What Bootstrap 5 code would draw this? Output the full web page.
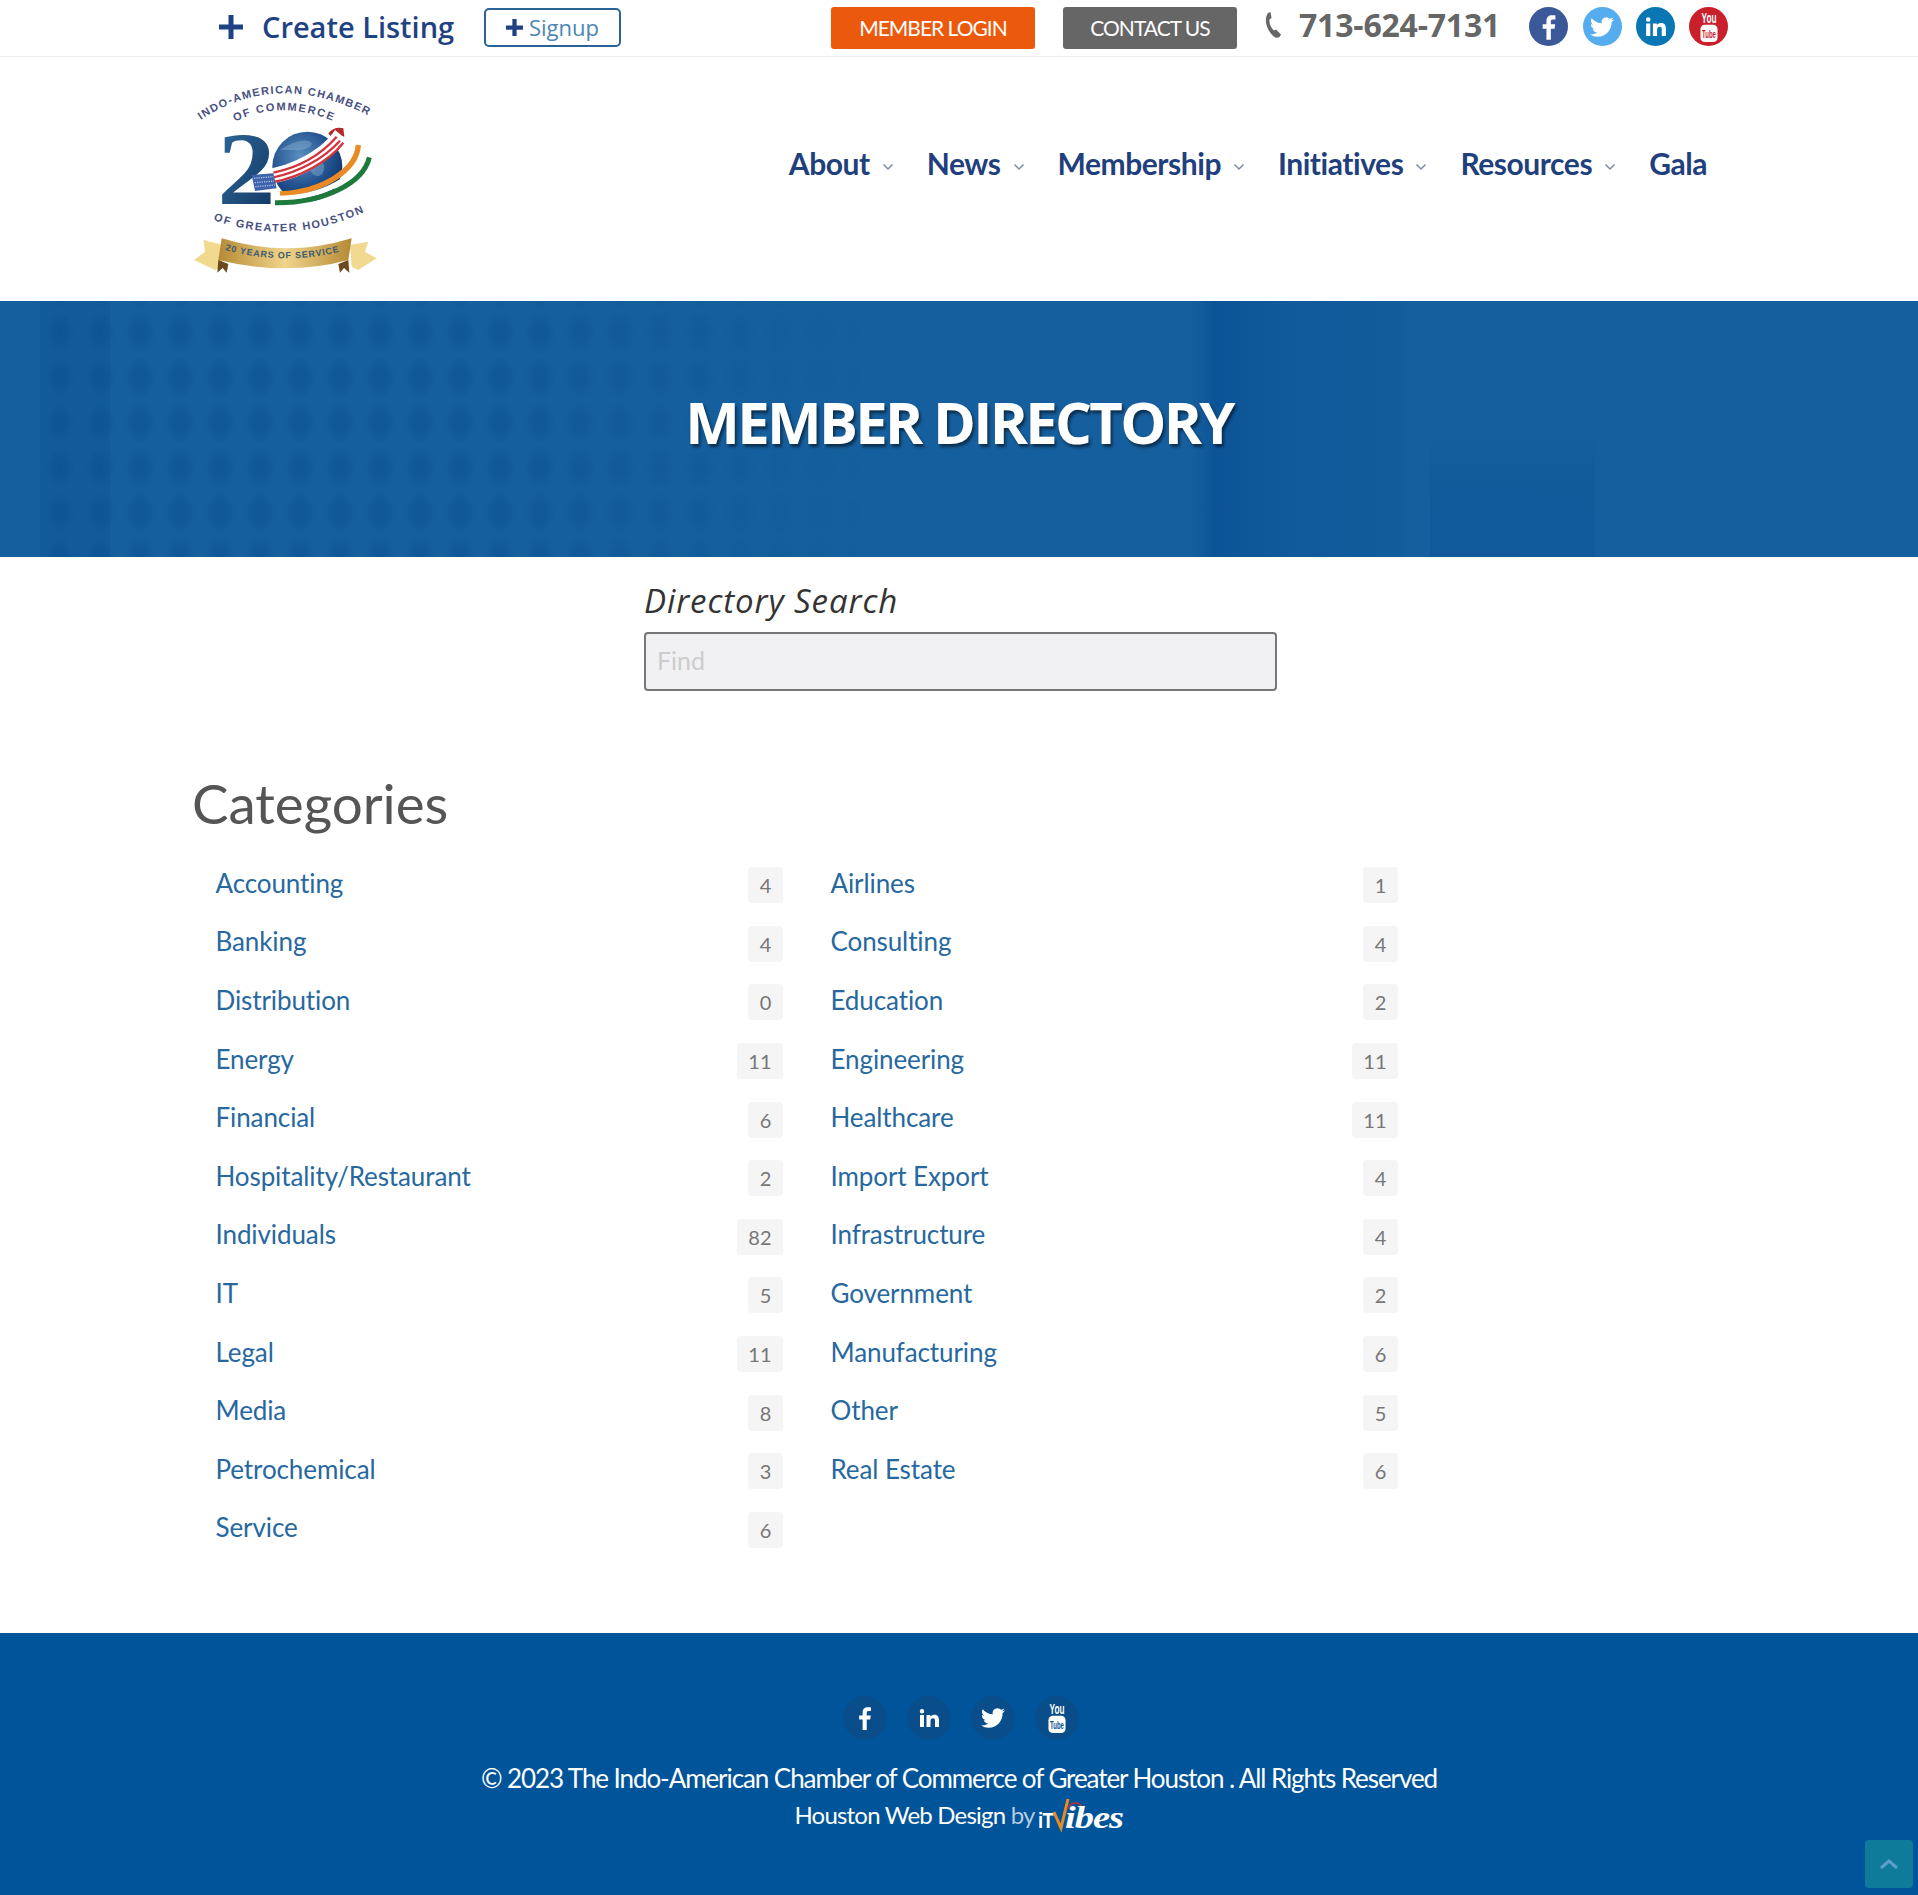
<!DOCTYPE html>
<html lang="en">
<head>
    <meta charset="UTF-8">
    <meta name="viewport" content="width=device-width, initial-scale=1.0">
    <title>Member Directory</title>
    <link href="https://cdn.jsdelivr.net/npm/bootstrap@5.3.3/dist/css/bootstrap.min.css" rel="stylesheet">
    <style>
        body { font-family: "Lato", "Liberation Sans", sans-serif; color: #555; background: #fff; }
        a { text-decoration: none; }

        /* top strip */
        .top-strip { height: 57px; border-bottom: 1px solid #eee; padding-left: 219px; }
        .create-link { font-family: "Open Sans", sans-serif; font-weight: 600; font-size: 29px; color: #1f4284; width: 265px; margin-top: -2px; }
        .create-link svg { margin-right: 19px; }
        .signup-btn { font-family: "Open Sans", sans-serif; font-size: 22px; color: #4d86b5; border: 2px solid #2a6496; border-radius: 5px; width: 137px; height: 39px; margin-top: -2px; }
        .signup-btn svg { margin-right: 6px; }
        .strip-btn { height: 42px; border-radius: 3px; color: #fff; font-size: 21px; letter-spacing: -1px; }
        .btn-login { background: #eb5a0c; width: 204px; margin-left: 210px; }
        .btn-contact { background: #666; width: 174px; margin-left: 28px; }
        .phone-num { font-family: "Open Sans", sans-serif; font-weight: 700; font-size: 32px; color: #666; letter-spacing: -.2px; margin-left: 17px; margin-top: -6px; }
        .phone-ico { margin-left: 27px; margin-top: -6px; }
        .soc-group { margin-left: 29px; gap: 14.400px; margin-top: -3px; }
        .soc-round { width: 39px; height: 39px; border-radius: 50%; }
        .soc-fb { background: #3b5998; }
        .soc-tw { background: #55acee; }
        .soc-li { background: #0a76b4; }
        .soc-yt { background: #c9202c; color: #c9202c; }
        .soc-yt svg, .foot-soc svg { overflow: visible; }

        /* logo + nav */
        .main-head { height: 244px; padding-left: 180px; padding-right: 211px; }
        .logo-box { margin-top: -9px; }
        .main-menu { gap: 33px; margin-top: -32px; }
        .main-menu a { font-weight: 700; font-size: 30px; color: #1f3f7d; letter-spacing: -.45px; }
        .main-menu svg { margin-left: 12px; }

        /* banner */
        .page-banner { height: 256px; background-color: #165f9e; overflow: hidden; }
        .page-banner::before { content: ""; position: absolute; left: 40px; top: 0; width: 820px; height: 100%;
            background-image: radial-gradient(ellipse 15px 21px at center, rgba(3,72,140,.34) 0, rgba(3,72,140,.28) 45%, transparent 100%),
                              linear-gradient(90deg, rgba(3,72,140,.15) 0, rgba(3,72,140,.15) 70px, transparent 70px);
            background-size: 40px 45px, 100% 100%;
            background-position: 80px 9px, 0 0;
            background-repeat: repeat, no-repeat;
            -webkit-mask-image: linear-gradient(90deg, #000 0, #000 55%, rgba(0,0,0,.35) 85%, transparent 100%); }
        .page-banner::after { content: ""; position: absolute; left: 1190px; top: 0; width: 420px; height: 100%;
            background-image: linear-gradient(90deg, transparent 0, rgba(3,75,145,.55) 25px, rgba(3,75,145,.3) 100px, rgba(3,75,145,.12) 210px, transparent 220px),
                              linear-gradient(180deg, transparent 0, transparent 50%, rgba(3,75,145,.22) 75%, rgba(3,75,145,.3) 100%);
            background-size: 100% 100%, 165px 100%; background-position: 0 0, 240px 0; background-repeat: no-repeat; }
        .page-banner h1 { position: relative; z-index: 1; font-family: "Open Sans", sans-serif; font-weight: 700; font-size: 58px; letter-spacing: -2.700px; color: #fff; text-shadow: 2px 3px 3px rgba(0,0,0,.5); margin: 0 0 14px; }

        /* search */
        .search-box { width: 633px; margin-left: 644px; padding-top: 22px; }
        .search-box label { font-family: "Open Sans", sans-serif; font-style: italic; font-size: 33px; letter-spacing: .9px; color: #333; line-height: 44px; margin-bottom: 9px; display: block; }
        .search-box .form-control { height: 59px; background: #f1f1f3; border: 2px solid #777; border-radius: 4px; font-size: 25px; padding: 0 11px 4px; font-family: "Lato", sans-serif; }
        .search-box .form-control::placeholder { color: #ccc; }

        /* categories */
        .cat-wrap { width: 1230px; margin-left: 192px; padding-top: 78px; padding-bottom: 74px; }
        .cat-wrap h2 { font-weight: 400; font-size: 54.700px; color: #555; line-height: 68px; margin-bottom: 19px; }
        .cat-list .list-group-item { border: 0; border-radius: 0; background: none; height: 58.600px; padding: 0 24px 0 23.500px; display: flex; justify-content: space-between; align-items: center; }
        .cat-list a { font-size: 26px; letter-spacing: -.1px; color: #27689f; margin-top: -4px; }
        .count-tag { background: #f5f5f5; color: #777; font-weight: 400; font-size: 20px; line-height: 36px; min-width: 35px; height: 36px; padding: 0 11.500px; border-radius: 4px; text-align: center; }

        /* footer */
        .site-foot { background: #00549a; height: 263px; padding-top: 64px; color: #fff; }
        .foot-soc { gap: 20px; margin-left: 3px; margin-top: -1px; color: #0a4d8b; }
        .foot-soc span { width: 44px; height: 44px; border-radius: 50%; background: #0a4d8b; }
        .foot-copy { font-size: 26px; letter-spacing: -1.080px; margin: 19px 0 0; line-height: 38px; }
        .foot-web { font-size: 24px; letter-spacing: -.8px; line-height: 36px; gap: 3px; }
        .foot-web .by-word { color: #b5cce2; }
        .foot-web svg { overflow: visible; }
        .to-top { position: fixed; right: 5px; bottom: 7px; width: 48px; height: 48px; background: #0e7b9b; border-radius: 4px; }
    </style>
</head>
<body>
    <!-- icons -->
    <svg width="0" height="0" class="position-absolute">
        <symbol id="i-f" viewBox="0 0 24 24"><path fill="#fff" d="M13.6 23v-9.6h3.2l.5-3.8h-3.7V7.3c0-1.1.3-1.8 1.9-1.8h2V2.1c-.4 0-1.5-.1-2.9-.1-2.9 0-4.8 1.700-4.800 4.900v2.700H6.600v3.800h3.200V23z"/></symbol>
        <symbol id="i-t" viewBox="0 0 24 24"><path fill="#fff" d="M23.953 4.57a10 10 0 01-2.825.775 4.958 4.958 0 002.163-2.723c-.951.555-2.005.959-3.127 1.184a4.92 4.92 0 00-8.384 4.482C7.69 8.095 4.067 6.13 1.64 3.162a4.822 4.822 0 00-.666 2.475c0 1.71.87 3.213 2.188 4.096a4.904 4.904 0 01-2.228-.616v.06a4.923 4.923 0 003.946 4.827 4.996 4.996 0 01-2.212.085 4.936 4.936 0 004.604 3.417 9.867 9.867 0 01-6.102 2.105c-.39 0-.779-.023-1.17-.067a13.995 13.995 0 007.557 2.209c9.053 0 13.998-7.496 13.998-13.985 0-.21 0-.42-.015-.63A9.935 9.935 0 0024 4.59z"/></symbol>
        <symbol id="i-in" viewBox="0 0 24 24"><path fill="#fff" d="M3 9h4v12H3zM5 3a2.200 2.200 0 110 4.400A2.200 2.200 0 015 3zM9.500 9h3.800v1.700c.6-1 1.900-2 3.900-2 4 0 4.800 2.600 4.800 6V21h-4v-5.600c0-1.400 0-3.100-1.900-3.100s-2.600 1.500-2.600 3V21h-4z"/></symbol>
        <symbol id="i-chev" viewBox="0 0 12 8"><path d="M1.500 1.500 6 6l4.500-4.500" fill="none" stroke="#7d8aa5" stroke-width="1.500"/></symbol>
    </svg>

    <!-- top strip -->
    <div class="top-strip d-flex align-items-center">
        <a href="#" class="create-link d-flex align-items-center">
            <svg width="24" height="24" viewBox="0 0 24 24"><path fill="#1f4284" d="M9.500 0h5v9.500H24v5h-9.500V24h-5v-9.500H0v-5h9.500z"/></svg>Create Listing
        </a>
        <a href="#" class="signup-btn d-flex align-items-center justify-content-center">
            <svg width="17" height="17" viewBox="0 0 24 24"><path fill="#1f4284" d="M9 0h6v9h9v6h-9v9H9v-9H0V9h9z"/></svg>Signup
        </a>
        <a href="#" class="strip-btn btn-login d-flex align-items-center justify-content-center">MEMBER LOGIN</a>
        <a href="#" class="strip-btn btn-contact d-flex align-items-center justify-content-center">CONTACT US</a>
        <svg class="phone-ico" width="18" height="26" viewBox="0 0 18 26"><path d="M4 1 6.500 0l1 6-2 1.500C5 11 7 16 10 18.500l2-1 5 5-1.500 2.500c-3 2-6 0-9-4C2 15 0 7 4 1z" fill="#666"/></svg>
        <span class="phone-num">713-624-7131</span>
        <div class="soc-group d-flex">
            <span class="soc-round soc-fb d-flex align-items-center justify-content-center"><svg width="28" height="28"><use href="#i-f"/></svg></span>
            <span class="soc-round soc-tw d-flex align-items-center justify-content-center"><svg width="24" height="24"><use href="#i-t"/></svg></span>
            <span class="soc-round soc-li d-flex align-items-center justify-content-center"><svg width="25" height="25"><use href="#i-in"/></svg></span>
            <span class="soc-round soc-yt d-flex align-items-center justify-content-center">
                <svg width="26" height="32" viewBox="0 0 24 30">
                    <text x="12" y="11" text-anchor="middle" fill="#fff" font-family="Liberation Sans" font-weight="700" font-size="13" textLength="14" lengthAdjust="spacingAndGlyphs">You</text>
                    <rect x="4" y="13" width="16" height="16" rx="4" fill="#fff"/>
                    <text x="12" y="25" text-anchor="middle" fill="currentColor" font-family="Liberation Sans" font-weight="700" font-size="11" textLength="13" lengthAdjust="spacingAndGlyphs">Tube</text>
                </svg>
            </span>
        </div>
    </div>

    <!-- logo and menu -->
    <div class="main-head d-flex justify-content-between align-items-center">
        <a href="#" class="logo-box">
            <svg width="220" height="210" viewBox="0 0 660 630">
                <defs>
                    <path id="arc-top" d="M62 150 Q300 -10 590 150"/>
                    <path id="arc-mid" d="M165 155 Q310 85 470 158"/>
                    <path id="arc-low" d="M100 450 Q330 530 555 425"/>
                    <path id="arc-ban" d="M135 540 Q320 590 500 540"/>
                    <linearGradient id="two-g" x1="0" y1="0" x2="1" y2="1"><stop offset="0" stop-color="#2f6d9e"/><stop offset="1" stop-color="#12345f"/></linearGradient>
                    <radialGradient id="globe-g" cx=".4" cy=".35" r=".75"><stop offset="0" stop-color="#5a8fc0"/><stop offset=".6" stop-color="#1f4f8c"/><stop offset="1" stop-color="#0d2c5c"/></radialGradient>
                    <linearGradient id="gold-g" x1="0" x2="1"><stop offset="0" stop-color="#b58a35"/><stop offset=".5" stop-color="#f0d48c"/><stop offset="1" stop-color="#b58a35"/></linearGradient>
                </defs>
                <g fill="#48507f" font-family="Liberation Sans, sans-serif" font-weight="700">
                    <text font-size="33" letter-spacing="4"><textPath href="#arc-top">INDO-AMERICAN CHAMBER</textPath></text>
                    <text font-size="33" letter-spacing="5"><textPath href="#arc-mid">OF COMMERCE</textPath></text>
                    <text font-size="33" letter-spacing="4.500"><textPath href="#arc-low">OF GREATER HOUSTON</textPath></text>
                </g>
                <text x="112" y="402" font-family="Liberation Serif, serif" font-weight="700" font-size="310" textLength="175" lengthAdjust="spacingAndGlyphs" fill="url(#two-g)">2</text>
                <path d="M445 190c10-15 30-20 45-15l3 25c-15-5-30 0-36 5z" fill="#b32a2a"/>
                <circle cx="382" cy="290" r="105" fill="url(#globe-g)"/>
                <path d="M300 240c30-20 70-35 90-25s-20 30-50 25zM400 270c20-5 40 10 30 35s-40 10-40-10z" fill="#7fa7cb" opacity=".5"/>
                <g fill="none">
                    <path d="M535 225C530 300 430 365 300 372" stroke="#e98a24" stroke-width="16"/>
                    <path d="M552 245C540 320 430 385 292 385" stroke="#fff" stroke-width="16"/>
                    <path d="M568 262C550 340 430 400 285 398" stroke="#1e7a3c" stroke-width="15"/>
                </g>
                <path d="M280 340c80-15 170-60 215-135l-30-25c-40 60-120 100-190 115z" fill="#fff"/>
                <path d="M280 308c70-15 140-50 190-108M280 322c75-15 150-55 200-110M280 336c80-15 165-60 210-118" fill="none" stroke="#d2333d" stroke-width="7"/>
                <path d="M215 315l65-5 10 45-65 8z" fill="#3f62ad"/>
                <path d="M222 325l58-5M224 338l58-5M226 350l58-5" stroke="#a9bde0" stroke-width="4" stroke-dasharray="4 3"/>
                <path d="M70 510 130 525 125 590 105 600 42 570 75 545z" fill="#f1d98f"/>
                <path d="M565 515 510 525 515 590 535 600 590 565 555 545z" fill="#f1d98f"/>
                <path d="M125 505Q320 565 515 505l-10 65Q320 620 115 570z" fill="url(#gold-g)"/>
                <path d="M115 570l30 12-5 26-12-14-16 14zM505 570l-30 12 5 26 12-14 16 14z" fill="#6b4a1e"/>
                <text font-size="27" fill="#3d5a6e" font-family="Liberation Sans, sans-serif" font-weight="700" letter-spacing="2.500"><textPath href="#arc-ban">20 YEARS OF SERVICE</textPath></text>
            </svg>
        </a>
        <nav class="main-menu d-flex align-items-center">
            <a href="#">About<svg width="12" height="8"><use href="#i-chev"/></svg></a>
            <a href="#">News<svg width="12" height="8"><use href="#i-chev"/></svg></a>
            <a href="#">Membership<svg width="12" height="8"><use href="#i-chev"/></svg></a>
            <a href="#">Initiatives<svg width="12" height="8"><use href="#i-chev"/></svg></a>
            <a href="#">Resources<svg width="12" height="8"><use href="#i-chev"/></svg></a>
            <a href="#">Gala</a>
        </nav>
    </div>

    <!-- banner -->
    <section class="page-banner position-relative d-flex align-items-center justify-content-center">
        <h1>MEMBER DIRECTORY</h1>
    </section>

    <!-- search -->
    <div class="search-box">
        <label for="find-input">Directory Search</label>
        <input id="find-input" type="text" class="form-control" placeholder="Find">
    </div>

    <!-- categories -->
    <div class="cat-wrap">
        <h2>Categories</h2>
        <div class="row g-0">
            <div class="col-6">
                <ul class="list-group cat-list">
                    <li class="list-group-item"><a href="#">Accounting</a><span class="count-tag">4</span></li>
                    <li class="list-group-item"><a href="#">Banking</a><span class="count-tag">4</span></li>
                    <li class="list-group-item"><a href="#">Distribution</a><span class="count-tag">0</span></li>
                    <li class="list-group-item"><a href="#">Energy</a><span class="count-tag">11</span></li>
                    <li class="list-group-item"><a href="#">Financial</a><span class="count-tag">6</span></li>
                    <li class="list-group-item"><a href="#">Hospitality/Restaurant</a><span class="count-tag">2</span></li>
                    <li class="list-group-item"><a href="#">Individuals</a><span class="count-tag">82</span></li>
                    <li class="list-group-item"><a href="#">IT</a><span class="count-tag">5</span></li>
                    <li class="list-group-item"><a href="#">Legal</a><span class="count-tag">11</span></li>
                    <li class="list-group-item"><a href="#">Media</a><span class="count-tag">8</span></li>
                    <li class="list-group-item"><a href="#">Petrochemical</a><span class="count-tag">3</span></li>
                    <li class="list-group-item"><a href="#">Service</a><span class="count-tag">6</span></li>
                </ul>
            </div>
            <div class="col-6">
                <ul class="list-group cat-list">
                    <li class="list-group-item"><a href="#">Airlines</a><span class="count-tag">1</span></li>
                    <li class="list-group-item"><a href="#">Consulting</a><span class="count-tag">4</span></li>
                    <li class="list-group-item"><a href="#">Education</a><span class="count-tag">2</span></li>
                    <li class="list-group-item"><a href="#">Engineering</a><span class="count-tag">11</span></li>
                    <li class="list-group-item"><a href="#">Healthcare</a><span class="count-tag">11</span></li>
                    <li class="list-group-item"><a href="#">Import Export</a><span class="count-tag">4</span></li>
                    <li class="list-group-item"><a href="#">Infrastructure</a><span class="count-tag">4</span></li>
                    <li class="list-group-item"><a href="#">Government</a><span class="count-tag">2</span></li>
                    <li class="list-group-item"><a href="#">Manufacturing</a><span class="count-tag">6</span></li>
                    <li class="list-group-item"><a href="#">Other</a><span class="count-tag">5</span></li>
                    <li class="list-group-item"><a href="#">Real Estate</a><span class="count-tag">6</span></li>
                </ul>
            </div>
        </div>
    </div>

    <!-- footer -->
    <footer class="site-foot text-center">
        <div class="foot-soc d-flex justify-content-center">
            <span class="d-flex align-items-center justify-content-center"><svg width="26" height="26"><use href="#i-f"/></svg></span>
            <span class="d-flex align-items-center justify-content-center"><svg width="24" height="24"><use href="#i-in"/></svg></span>
            <span class="d-flex align-items-center justify-content-center"><svg width="24" height="24"><use href="#i-t"/></svg></span>
            <span class="d-flex align-items-center justify-content-center">
                <svg width="26" height="32" viewBox="0 0 24 30">
                    <text x="12" y="11" text-anchor="middle" fill="#fff" font-family="Liberation Sans" font-weight="700" font-size="13" textLength="14" lengthAdjust="spacingAndGlyphs">You</text>
                    <rect x="4" y="13" width="16" height="16" rx="4" fill="#fff"/>
                    <text x="12" y="25" text-anchor="middle" fill="currentColor" font-family="Liberation Sans" font-weight="700" font-size="11" textLength="13" lengthAdjust="spacingAndGlyphs">Tube</text>
                </svg>
            </span>
        </div>
        <p class="foot-copy">© 2023 The Indo-American Chamber of Commerce of Greater Houston . All Rights Reserved</p>
        <div class="foot-web d-flex justify-content-center align-items-center">
            <span>Houston Web Design <span class="by-word">by</span></span>
            <svg width="86" height="36" viewBox="0 0 86 36">
                <text x="0" y="31" fill="#fff" font-family="Liberation Sans, sans-serif" font-weight="700" font-size="22" textLength="15" lengthAdjust="spacingAndGlyphs">iT</text>
                <path d="M16 15l7 16 7-29" fill="none" stroke="#e98a24" stroke-width="3"/>
                <path d="M29 13c3-9 13-9 15-2" fill="none" stroke="#c9302c" stroke-width="1.500"/>
                <text x="27" y="31" fill="#fff" font-family="Liberation Serif, serif" font-style="italic" font-weight="700" font-size="31" textLength="58" lengthAdjust="spacingAndGlyphs">ibes</text>
            </svg>
        </div>
    </footer>

    <a href="#" class="to-top d-flex align-items-center justify-content-center">
        <svg width="20" height="12" viewBox="0 0 20 12"><path d="M2 10l8-7 8 7" fill="none" stroke="#5e9fc9" stroke-width="3"/></svg>
    </a>

    <script src="https://cdn.jsdelivr.net/npm/bootstrap@5.3.3/dist/js/bootstrap.bundle.min.js"></script>
</body>
</html>
